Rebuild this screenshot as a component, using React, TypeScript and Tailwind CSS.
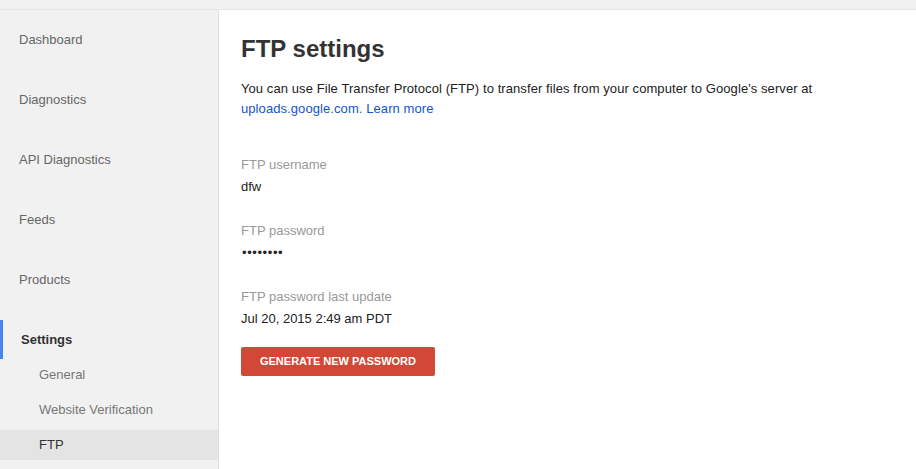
import { Fragment } from "react";

const navItems = ["Dashboard", "Diagnostics", "API Diagnostics", "Feeds", "Products"];
const subItems = ["General", "Website Verification", "FTP"];

const fields = [
  { label: "FTP username", value: "dfw" },
  { label: "FTP password", value: "••••••••", dots: true },
  { label: "FTP password last update", value: "Jul 20, 2015 2:49 am PDT" },
];

export default function App() {
  return (
    <div className="flex h-screen min-h-[469px] flex-col bg-white font-['Liberation_Sans',Arial,sans-serif] text-[13px]">
      <div className="h-[10px] shrink-0 border-b border-[#e5e5e5] bg-[#f1f1f1]" />
      <div className="flex flex-1">
        <nav className="flex w-[219px] shrink-0 flex-col border-r border-[#e0e0e0] bg-[#f1f1f1]">
          {navItems.map((item) => (
            <div key={item} className="flex h-[60px] items-center pl-[19px] text-[#666]">
              {item}
            </div>
          ))}
          <div className="mt-[10px] flex h-[39px] items-center border-l-[3px] border-[#4285f4] pl-[18px] font-bold text-[#333]">
            Settings
          </div>
          {subItems.map((item, i) => (
            <Fragment key={item}>
              <div
                className={`flex h-[30px] items-center pl-[39px] ${
                  i > 0 ? "mt-[5px]" : "mt-[1px]"
                } ${item === "FTP" ? "bg-[#e4e4e4] text-[#333]" : "text-[#777]"}`}
              >
                {item}
              </div>
            </Fragment>
          ))}
        </nav>
        <main className="flex-1 pl-[22px] pt-[24px] text-[#333]">
          <h1 className="text-[24px] font-bold leading-[30px] text-[#333]">FTP settings</h1>
          <p className="mt-[15px] w-[600px] leading-[20px] tracking-[0.08px] text-[#222]">
            You can use File Transfer Protocol (FTP) to transfer files from your computer to Google's server at{" "}
            <span className="text-[#1155cc]">uploads.google.com.</span>{" "}
            <span className="text-[#1155cc]">Learn more</span>
          </p>
          <div className="mt-[36px] flex flex-col gap-[24px]">
            {fields.map((f) => (
              <div key={f.label} className="flex flex-col gap-[2px] leading-[20px]">
                <span className="text-[#999]">{f.label}</span>
                <span className={`text-[#222] ${f.dots ? "pl-[1px] tracking-[0.6px]" : ""}`}>{f.value}</span>
              </div>
            ))}
          </div>
          <button className="mt-[18px] h-[29px] w-[194px] rounded-[2px] bg-[#d14836] text-[11px] font-bold text-white">
            GENERATE NEW PASSWORD
          </button>
        </main>
      </div>
    </div>
  );
}
